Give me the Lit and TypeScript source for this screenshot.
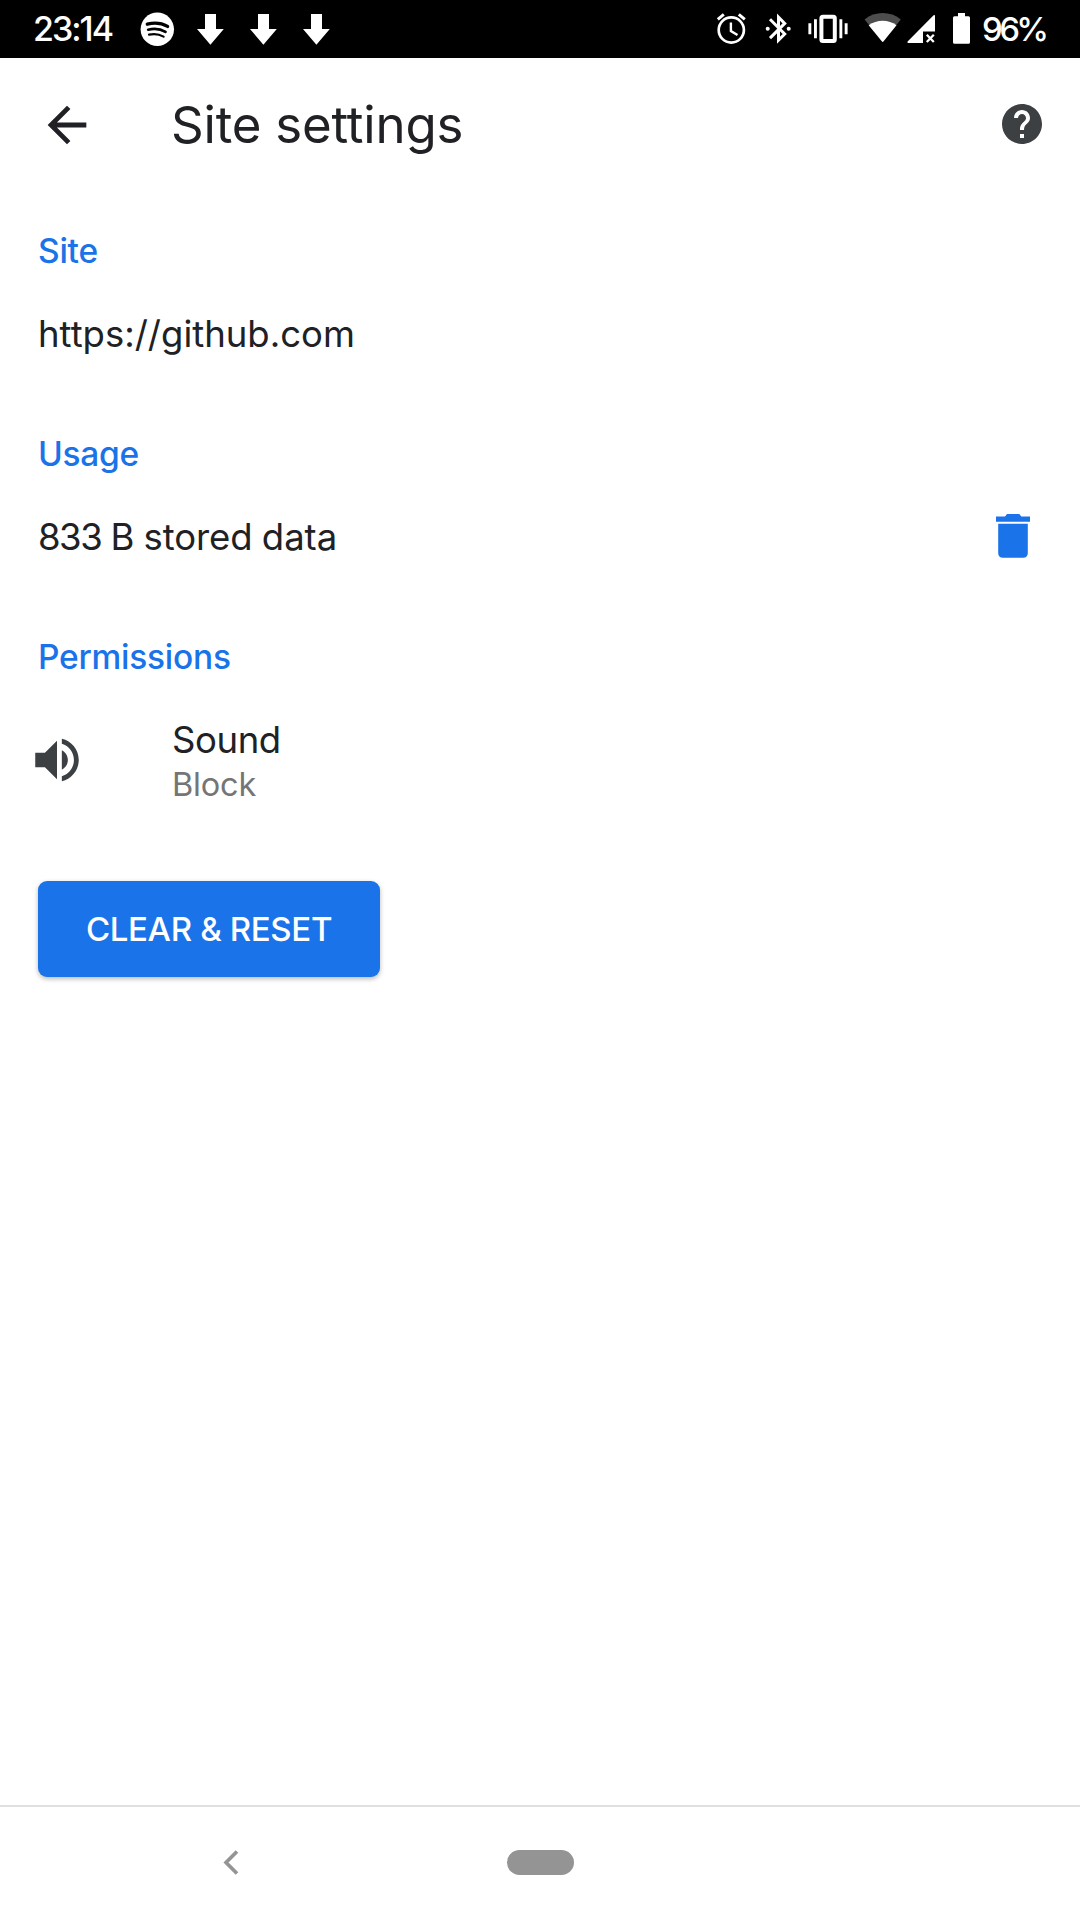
import { LitElement, html, css } from "lit";
import { customElement } from "lit/decorators.js";

const downloadArrow = () => html`
  <svg class="download" viewBox="197 14 27 31" width="27" height="31">
    <path d="M205 14h11v15h7.8L210.400 44.800 197 29h8z" fill="#fff" />
  </svg>
`;

@customElement("status-bar")
class StatusBar extends LitElement {
  static styles = css`
    :host {
      display: flex;
      justify-content: space-between;
      align-items: flex-start;
      box-sizing: border-box;
      height: 58px;
      padding: 0 34px 0 33px;
      background: #000;
      color: #fff;
      font: 500 34px/58px Inter, "Open Sans", sans-serif;
    }
    .group {
      display: flex;
      height: 58px;
    }
    .clock {
      width: 107px;
      letter-spacing: -2px;
      white-space: nowrap;
    }
    .download {
      margin: 14px 0 0 26px;
    }
    .spotify {
      margin-right: -4px;
    }
    .battery-level {
      width: 64px;
      font-size: 33px;
      letter-spacing: -3.6px;
      white-space: nowrap;
    }
    svg {
      display: block;
      flex: none;
    }
  `;

  render() {
    return html`
      <div class="group">
        <span class="clock">23:14</span>
        <svg class="spotify" viewBox="140 0 35 58" width="35" height="58" fill="none" stroke="#000" stroke-linecap="round">
          <circle cx="157.300" cy="29.300" r="16.700" fill="#fff" stroke="none" />
          <path d="M147.300 24.200c6.500-1.600 14.500-1 20.300 2.200" stroke-width="3.300" />
          <path d="M148.200 29.700c5.800-1.400 12.300-.8 17.300 2.200" stroke-width="2.700" />
          <path d="M149 34.600c5-1.100 10.300-.5 14.600 2" stroke-width="2.200" />
        </svg>
        ${downloadArrow()}${downloadArrow()}${downloadArrow()}
      </div>
      <div class="group">
        <svg viewBox="716 0 266 58" width="266" height="58" fill="#fff">
          <g fill="none" stroke="#fff" stroke-width="2.700">
            <circle cx="731.300" cy="30" r="12.600" />
            <path d="M730.900 22.500v8.500l6.600 4" stroke-width="2.400" />
            <path d="M717.800 19.300l6-4.900M738.800 14.400l6 4.900" stroke-width="3" />
            <path d="M770 19.300l14.700 14.700-6.200 6.200V17.200l6.200 6.200L770 38.100" stroke-width="3" />
          </g>
          <circle cx="767.700" cy="28.700" r="2" />
          <circle cx="788.700" cy="28.700" r="2" />
          <rect x="821.400" y="16.700" width="13.400" height="24.400" rx="1.500" fill="none" stroke="#fff" stroke-width="4" />
          <path d="M814 19.300h2.900v19H814zM808.400 23.300h2.900v11h-2.900zM839.400 19.300h2.900v19h-2.900zM844.700 23.300h2.900v11h-2.900z" />
          <path d="M864.600 19.400C875 10.900 890.300 10.900 900.800 19.400L882.700 42z" fill="#4d4d4d" />
          <path d="M868.700 25.200C876.700 19.100 888.700 19.100 896.500 25.200L883.400 41.500q-.7.800-1.400 0z" />
          <path d="M907.600 41.600L933.600 15.300q1.400-1 1.400.6V31.500H923V43h-14.700q-1.700 0-.7-1.400z" />
          <path d="M926.800 34.700l7 7.300M933.800 34.700l-7 7.300" stroke="#fff" stroke-width="2.300" />
          <path d="M958 13h7v3.300h3.500q1.500 0 1.500 1.500v24.500q0 1.500-1.500 1.500h-14q-1.500 0-1.500-1.500V17.800q0-1.500 1.500-1.500h3.500z" />
        </svg>
        <span class="battery-level">96%</span>
      </div>
    `;
  }
}

@customElement("app-root")
class AppRoot extends LitElement {
  static styles = css`
    :host {
      display: flex;
      flex-direction: column;
      height: 1920px;
      background: #fff;
      color: #202124;
      font-family: Inter, "Open Sans", sans-serif;
      overflow: hidden;
    }
    svg {
      display: block;
      flex: none;
    }
    .app-bar {
      display: flex;
      align-items: center;
      flex: none;
      box-sizing: border-box;
      height: 134px;
      padding: 0 34px 0 38px;
    }
    .title {
      flex: 1;
      margin: 0 0 0 75px;
      font-size: 51px;
      font-weight: 400;
      line-height: 60px;
      letter-spacing: -0.2px;
    }
    .help {
      margin-bottom: 2px;
    }
    .section {
      box-sizing: border-box;
      flex: none;
      height: 203px;
      padding: 39px 50px 0 38px;
    }
    .heading {
      margin: 0 0 42px;
      color: #1a73e8;
      font-size: 33.5px;
      font-weight: 500;
      line-height: 41px;
      letter-spacing: -0.25px;
    }
    .row {
      display: flex;
      align-items: center;
      justify-content: space-between;
      height: 41px;
      font-size: 36.5px;
      line-height: 41px;
    }
    .usage {
      letter-spacing: -0.05px;
      word-spacing: -1px;
    }
    .amount {
      letter-spacing: -1.5px;
    }
    .trash {
      margin-bottom: 4px;
    }
    .permissions {
      height: 283px;
    }
    .permission {
      display: flex;
      align-items: center;
      margin: -1px 0 0 -10px;
      height: 88px;
    }
    .volume {
      margin-bottom: 7px;
    }
    .labels {
      margin-left: 86px;
      letter-spacing: -0.4px;
    }
    .name {
      font-size: 36.5px;
      line-height: 43px;
    }
    .state {
      color: #757575;
      font-size: 32.500px;
      line-height: 45px;
      letter-spacing: -0.2px;
    }
    .reset {
      align-self: flex-start;
      flex: none;
      width: 342px;
      height: 96px;
      margin-left: 38px;
      padding: 0;
      border: 0;
      border-radius: 9px;
      background: #1a73e8;
      box-shadow: 0 2px 5px rgba(0, 0, 0, 0.28);
      color: #fff;
      font: 500 33px/96px Inter, "Open Sans", sans-serif;
      letter-spacing: -0.35px;
      white-space: nowrap;
    }
    .spacer {
      flex: 1;
    }
    .nav {
      display: grid;
      grid-template-columns: 462px 156px 462px;
      align-items: center;
      justify-items: center;
      flex: none;
      box-sizing: border-box;
      height: 115px;
      padding-bottom: 2px;
      border-top: 2px solid #e0e0e0;
    }
    .home {
      width: 67px;
      height: 24.500px;
      border-radius: 13px;
      background: #949494;
    }
  `;

  render() {
    return html`
      <status-bar></status-bar>
      <header class="app-bar">
        <svg viewBox="0 0 24 24" width="58" height="58" fill="#202124">
          <path d="M20 11H7.830l5.590-5.590L12 4l-8 8 8 8 1.410-1.410L7.830 13H20z" />
        </svg>
        <h1 class="title">Site settings</h1>
        <svg class="help" viewBox="0 0 24 24" width="48" height="48" fill="#3c4043">
          <path
            d="M12 2C6.480 2 2 6.480 2 12s4.480 10 10 10 10-4.480 10-10S17.520 2 12 2zm1 17h-2v-2h2zm2.070-7.750l-.9.920C13.450 12.900 13 13.500 13 15h-2v-.5c0-1.100.450-2.100 1.170-2.830l1.240-1.260c.370-.360.590-.860.590-1.410 0-1.100-.9-2-2-2s-2 .9-2 2H8c0-2.210 1.790-4 4-4s4 1.790 4 4c0 .880-.360 1.680-.930 2.250z"
          />
        </svg>
      </header>
      <section class="section">
        <h2 class="heading">Site</h2>
        <div class="row"><span>https://github.com</span></div>
      </section>
      <section class="section">
        <h2 class="heading">Usage</h2>
        <div class="row">
          <span class="usage"><span class="amount">833</span> B stored data</span>
          <svg class="trash" viewBox="996 514 34 44" width="34" height="44" fill="#1a73e8">
            <path d="M996 516.400h9l2-2.400h12.300l2 2.400h8.700v5.300h-34zM998.200 523.800h29.600v29.200q0 4.800-4.800 4.800h-20q-4.800 0-4.800-4.800z" />
          </svg>
        </div>
      </section>
      <section class="section permissions">
        <h2 class="heading">Permissions</h2>
        <div class="permission">
          <svg class="volume" viewBox="0 0 24 24" width="58" height="58" fill="#3c4043">
            <path
              d="M3 9v6h4l5 5V4L7 9zm13.500 3c0-1.770-1.020-3.290-2.500-4.030v8.050c1.480-.730 2.500-2.250 2.500-4.020zM14 3.230v2.060c2.890.860 5 3.540 5 6.710s-2.110 5.850-5 6.710v2.060c4.010-.910 7-4.490 7-8.770s-2.990-7.860-7-8.770z"
            />
          </svg>
          <div class="labels">
            <div class="name">Sound</div>
            <div class="state">Block</div>
          </div>
        </div>
      </section>
      <button class="reset">CLEAR &amp; RESET</button>
      <div class="spacer"></div>
      <nav class="nav">
        <svg viewBox="222 1848 18 30" width="18" height="30">
          <path d="M237 1851.500l-11 11 11 11" fill="none" stroke="#949494" stroke-width="3.600" />
        </svg>
        <div class="home"></div>
      </nav>
    `;
  }
}
